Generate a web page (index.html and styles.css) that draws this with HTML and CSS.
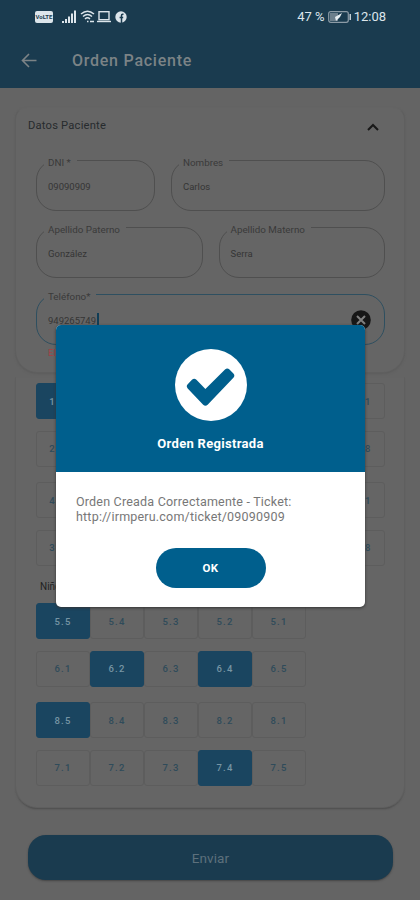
FILE: index.html
```html
<!DOCTYPE html>
<html lang="es">
<head>
<meta charset="utf-8">
<title>Orden Paciente</title>
<link rel="stylesheet" href="styles.css">
</head>
<body>
<div class="screen">
  <header class="top">
    <div class="status">
      <div class="status-left">
        <span class="volte">VoLTE</span>
        <svg class="signal" width="15" height="13" viewBox="0 0 15 13"><path d="M0 11h2v2H0zM3 9h2v4H3zM6 6.500h2V13H6zM9 3.500h2V13H9zM12 .5h2V13h-2z" fill="currentColor"/></svg>
        <svg class="wifi" width="16" height="13" viewBox="0 0 16 13" fill="none" stroke="currentColor" stroke-width="1.500"><path d="M1 4Q7.500-1.500 14 4M3 6.500Q7.500 2.500 12 6.500M5 9Q7.500 6.500 10 9"/><path d="M7 11.500h1.500M10 11.500h4"/></svg>
        <svg class="laptop" width="14" height="13" viewBox="0 0 14 13" fill="none" stroke="currentColor" stroke-width="1.400"><rect x="2" y="1.700" width="10" height="8"/><path d="M0 11.500h14"/></svg>
        <svg class="fb" width="12" height="12" viewBox="0 0 12 12"><circle cx="6" cy="6" r="5.700" fill="currentColor"/><path d="M8.500 3.200H7.600Q6.500 3.200 6.500 4.400V12M4.600 6.500h3.600" fill="none" stroke="#1a3b4f" stroke-width="1.500"/></svg>
      </div>
      <div class="status-right">
        <span class="pct">47 %</span>
        <svg width="24" height="12" viewBox="0 0 24 12"><rect x=".7" y=".7" width="19.600" height="10.600" rx="2" fill="none" stroke="#8c9ba6" stroke-width="1.200"/><path d="M2 2h8v8H2z" fill="#6c7f8c"/><path d="M7 6l7-4-2 4-4 4z" fill="#e6edf1"/><path d="M21.500 3h1.500v6h-1.500z" fill="#c3ced5"/></svg>
        <span class="clock">12:08</span>
      </div>
    </div>
    <div class="appbar">
      <svg width="16" height="15" viewBox="0 0 16 15" fill="none" stroke="currentColor" stroke-width="1.600"><path d="M15.500 7.500H1.500M8 1L1.500 7.500 8 14"/></svg>
      <h1>Orden Paciente</h1>
    </div>
  </header>
  <main>
    <section class="card patient">
      <div class="card-head"><span>Datos Paciente</span>
        <svg width="12" height="8" viewBox="0 0 12 8" fill="none" stroke="#181818" stroke-width="2"><path d="M1 7l5-5 5 5"/></svg>
      </div>
      <div class="form">
        <div class="row"><fieldset class="field dni"><legend>DNI *</legend>09090909</fieldset><fieldset class="field names"><legend>Nombres</legend>Carlos</fieldset></div>
        <div class="row"><fieldset class="field half"><legend>Apellido Paterno</legend>González</fieldset><fieldset class="field half"><legend>Apellido Materno</legend>Serra</fieldset></div>
        <fieldset class="field phone"><legend>Teléfono*</legend><span>949265749</span><i class="caret"></i>
          <svg class="clear" width="20" height="20" viewBox="0 0 20 20"><circle cx="10" cy="10" r="9.800" fill="#171717"/><path d="M6 6l8 8M14 6l-8 8" stroke="#808080" stroke-width="2"/></svg>
        </fieldset>
        <p class="error">El</p>
      </div>
    </section>
    <section class="card teeth">
      <div class="grid adult"><b class="on">1.8</b><b></b><b></b><b></b><b></b><b></b><b></b><b>1.1</b></div>
      <div class="grid adult"><b>2.1</b><b></b><b></b><b></b><b></b><b></b><b></b><b>2.8</b></div>
      <div class="grid adult lower"><b>4.8</b><b></b><b></b><b></b><b></b><b></b><b></b><b>4.1</b></div>
      <div class="grid adult"><b>3.1</b><b></b><b></b><b></b><b></b><b></b><b></b><b>3.8</b></div>
      <h2>Niños</h2>
      <div class="grid child"><b class="on">5.5</b><b>5.4</b><b>5.3</b><b>5.2</b><b>5.1</b></div>
      <div class="grid child"><b>6.1</b><b class="on">6.2</b><b>6.3</b><b class="on">6.4</b><b>6.5</b></div>
      <div class="grid child lower"><b class="on">8.5</b><b>8.4</b><b>8.3</b><b>8.2</b><b>8.1</b></div>
      <div class="grid child"><b>7.1</b><b>7.2</b><b>7.3</b><b class="on">7.4</b><b>7.5</b></div>
    </section>
    <button class="send">Enviar</button>
  </main>
  <div class="dialog">
    <div class="dialog-head">
      <svg width="74" height="74" viewBox="0 0 74 74"><circle cx="37" cy="37" r="36" fill="#fff"/><path d="M17.200 39.500Q15.500 37.500 17.200 35.800L21 31.700Q23 30 25 31.700L33 40 50.500 22.500Q52.500 20.800 54.500 22.500L58 26.200Q59.700 28 58 30L35 54Q33 55.800 31 54Z" transform="translate(37 39.300) scale(1.120) translate(-38 -38.500)" fill="#005f8d"/></svg>
      <strong>Orden Registrada</strong>
    </div>
    <div class="dialog-body">
      <p>Orden Creada Correctamente - Ticket:<br>http://irmperu.com/ticket/09090909</p>
      <button class="ok">OK</button>
    </div>
  </div>
</div>
</body>
</html>
```
FILE: styles.css
```css
* { box-sizing: border-box; }
body { margin: 0; font-family: Roboto, "Liberation Sans", sans-serif; }
button { border: 0; font-family: inherit; }
.screen { position: relative; width: 420px; height: 900px; overflow: hidden; background: #646464; }

.top { height: 88px; background: #1a3b4f; }
.status { height: 33px; padding: 0 34px 0 35px; display: flex; justify-content: space-between; align-items: center; color: #dce5eb; }
.status-left, .status-right { display: flex; align-items: center; }
.volte { width: 18px; height: 12px; border-radius: 2px; background: #dce5eb; color: #1a3b4f; font-size: 6px; line-height: 12px; font-weight: 700; text-align: center; }
.signal { margin-left: 9px; }
.wifi { margin-left: 3px; }
.laptop { margin-left: 1px; }
.fb { margin-left: 4px; }
.status-right { font-size: 13px; }
.pct { margin-right: 3px; }
.clock { margin-left: 2px; }
.appbar { height: 55px; padding-left: 21px; display: flex; align-items: center; gap: 35px; color: #7c8386; }
h1 { margin: 0; font-size: 16px; font-weight: 500; letter-spacing: .75px; }

main { padding: 19px 15px 0; }
.card { border: 1px solid #5f5f5f; background: #656565; }
.patient { height: 266px; border-radius: 12px 12px 22px 22px; border-top-color: #646464; box-shadow: 0 1px 2px #5d5d5d; }
.card-head { height: 42px; padding: 0 25px 7px 12px; display: flex; align-items: center; justify-content: space-between; font-size: 11.200px; letter-spacing: .2px; color: #272b2e; }
.card-head svg { margin-top: 2px; }
.form { padding: 5px 19px 0 20px; }
.row { display: flex; gap: 16px; height: 67px; }
.field { margin: 0; height: 56px; min-width: 0; padding: 0 11px; display: flex; border: 1px solid #4f4f4f; border-radius: 20px; font-size: 9.500px; line-height: 42px; color: #353535; font-weight: 400; }
.field legend { height: 11px; margin-left: -4px; padding: 2px 6px 0 4px; font-size: 9.800px; line-height: 11px; font-weight: 400; color: #3a3a3a; }
.dni { width: 119px; }
.names { flex: 1; }
.half { flex: 1; }
.phone { width: 100%; border-color: #2e4f60; }
.caret { width: 1.500px; height: 13px; margin: 13px 0 0 1px; background: #103d56; }
.clear { margin: 10px 2px 0 auto; }
.error { margin: 2px 0 0 12px; font-size: 9.500px; line-height: 12px; color: #a13f43; }

.teeth { height: 431px; margin-top: 4px; padding: 5px 19px 0 20px; border-top-color: #646464; border-radius: 0 0 22px 22px; box-shadow: 0 2px 2px -1px #4c4c4c; }
.grid { display: grid; height: 36px; margin-bottom: 11.500px; }
.adult { grid-template-columns: repeat(8, 1fr); }
.child { width: 270px; grid-template-columns: repeat(5, 1fr); }
.lower { margin-top: 15.500px; }
.grid b { display: flex; align-items: center; justify-content: center; border: 1px solid #5d5d5d; border-radius: 3px; font-size: 9.500px; font-weight: 500; letter-spacing: 1.200px; color: #2f4b5a; }
.grid b.on { background: #1a4560; border-color: #1a4560; color: #7795a4; }
h2 { height: 26px; margin: 0 0 0 4px; padding-top: 4px; font-size: 10px; font-weight: 400; line-height: 12px; color: #222; }

.send { display: block; width: 365px; height: 45px; margin: 27px 0 0 13px; border-radius: 18px; background: #1a3b4f; color: #5d707c; font-size: 13.500px; letter-spacing: .1px; font-weight: 400; box-shadow: 0 1px 2px #444; }

.dialog { position: absolute; left: 56px; top: 325px; width: 309px; height: 282px; border-radius: 5px; overflow: hidden; background: #fff; box-shadow: 0 1px 3px #333; }
.dialog-head { height: 147px; padding-top: 23px; display: flex; flex-direction: column; align-items: center; background: #005f8d; color: #fff; }
.dialog-head strong { margin-top: 14px; font-size: 13px; line-height: 16px; font-weight: 700; letter-spacing: .3px; }
.dialog-body { padding: 22px 20px 0; }
.dialog-body p { margin: 0; font-size: 12.500px; line-height: 15px; letter-spacing: .2px; white-space: nowrap; color: #777; }
.ok { display: block; width: 110px; height: 40px; margin: 24px auto 0; border-radius: 20px; background: #005f8d; color: #fff; font-size: 11.500px; font-weight: 700; letter-spacing: .3px; }
```
